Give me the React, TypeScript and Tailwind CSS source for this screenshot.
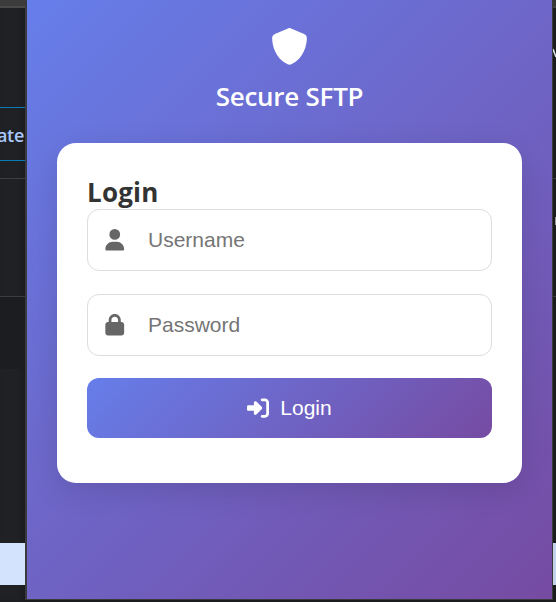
import { FaLock, FaRightToBracket, FaShield, FaUser } from "react-icons/fa6";
import type { ReactNode } from "react";

function Field({ icon, label, type }: { icon: ReactNode; label: string; type: string }) {
  return (
    <label className="flex h-[62px] items-center rounded-xl border border-[#ddd] bg-white pl-[16px] text-[#666]">
      {icon}
      <input
        type={type}
        placeholder={label}
        className="ml-[22.5px] min-w-0 flex-1 bg-transparent font-['Liberation_Sans',sans-serif] text-[21px] leading-6 outline-none placeholder:text-[#757575]"
      />
    </label>
  );
}

function LeftBackdrop() {
  return (
    <div className="flex w-[25px] shrink-0 flex-col overflow-hidden bg-[#202124] shadow-[inset_-3px_0_4px_#15161866]">
      <div className="h-[8px] shrink-0 border-b-2 border-[#4a4a4a] bg-[#3c3c3c]" />
      <div className="mt-[99px] flex h-[54px] shrink-0 items-center justify-end border-y border-[#087db5] pt-[2px] pr-[1px] font-['Open_Sans',sans-serif] text-[18px] font-semibold tracking-[-0.3px] text-[#a8c7fa]">
        <span>ate</span>
      </div>
      <div className="mt-[17px] h-px shrink-0 bg-[#3c3d40]" />
      <div className="mt-[117px] h-px shrink-0 bg-[#3c3d40]" />
      <div className="h-[72px] shrink-0 bg-[#1c1d21]" />
      <div className="mt-[174px] h-[42px] shrink-0 bg-[#d3e3fd]" />
    </div>
  );
}

function RightBackdrop() {
  return (
    <div className="flex w-[3px] shrink-0 flex-col overflow-hidden bg-[#1b1c1e]">
      <div className="h-[8px] shrink-0 border-b-2 border-[#424242] bg-[#363636]" />
      <svg className="mt-[40px] h-[10px] w-[3px] shrink-0" viewBox="0 0 3 10">
        <path d="M0 1L3 9" stroke="#d8e6e8" strokeWidth="1.5" />
      </svg>
      <div className="mt-[120px] h-px shrink-0 bg-[#3c3d40]" />
      <div className="mt-[38px] ml-[2px] h-[8px] w-px shrink-0 bg-[#999]" />
      <div className="mt-[71px] h-px shrink-0 bg-[#3c3d40]" />
      <div className="mt-[246px] h-[42px] shrink-0 bg-[#c4d3e9]" />
    </div>
  );
}

export default function App() {
  return (
    <div className="flex h-[602px] w-[556px] overflow-hidden bg-[#1b1c1e]">
      <LeftBackdrop />
      <div className="h-[600px] w-[528px] shrink-0 border-r border-b border-l-2 border-[#3b3b3e]">
        <main className="flex h-full flex-col bg-linear-[135deg,#667eea_0%,#764ba2_100%] px-[30px] font-['Open_Sans',sans-serif]">
          <header className="flex h-[143px] shrink-0 flex-col items-center pt-[28px] text-white">
            <FaShield className="size-[37px]" />
            <h1 className="mt-[12px] text-[26px] leading-[38px] font-semibold tracking-[-0.25px] whitespace-nowrap">Secure SFTP</h1>
          </header>
          <form className="flex h-[340px] shrink-0 flex-col rounded-[19px] bg-white px-[30px] pt-[31px] shadow-[0_8px_30px_rgba(0,0,0,0.12)]">
            <h2 className="h-[35px] text-[26px] leading-[37px] font-bold tracking-[0.2px] text-[#333]">Login</h2>
            <Field icon={<FaUser className="size-[21.5px]" />} label="Username" type="text" />
            <div className="h-[23px]" />
            <Field icon={<FaLock className="size-[21.5px]" />} label="Password" type="password" />
            <button
              type="button"
              className="mt-[22px] flex h-[60px] items-center justify-center gap-[11px] rounded-xl bg-linear-[135deg,#667eea_0%,#764ba2_100%] font-['Liberation_Sans',sans-serif] text-[21px] text-white"
            >
              <FaRightToBracket className="size-[22px]" />
              <span>Login</span>
            </button>
          </form>
        </main>
      </div>
      <RightBackdrop />
    </div>
  );
}
